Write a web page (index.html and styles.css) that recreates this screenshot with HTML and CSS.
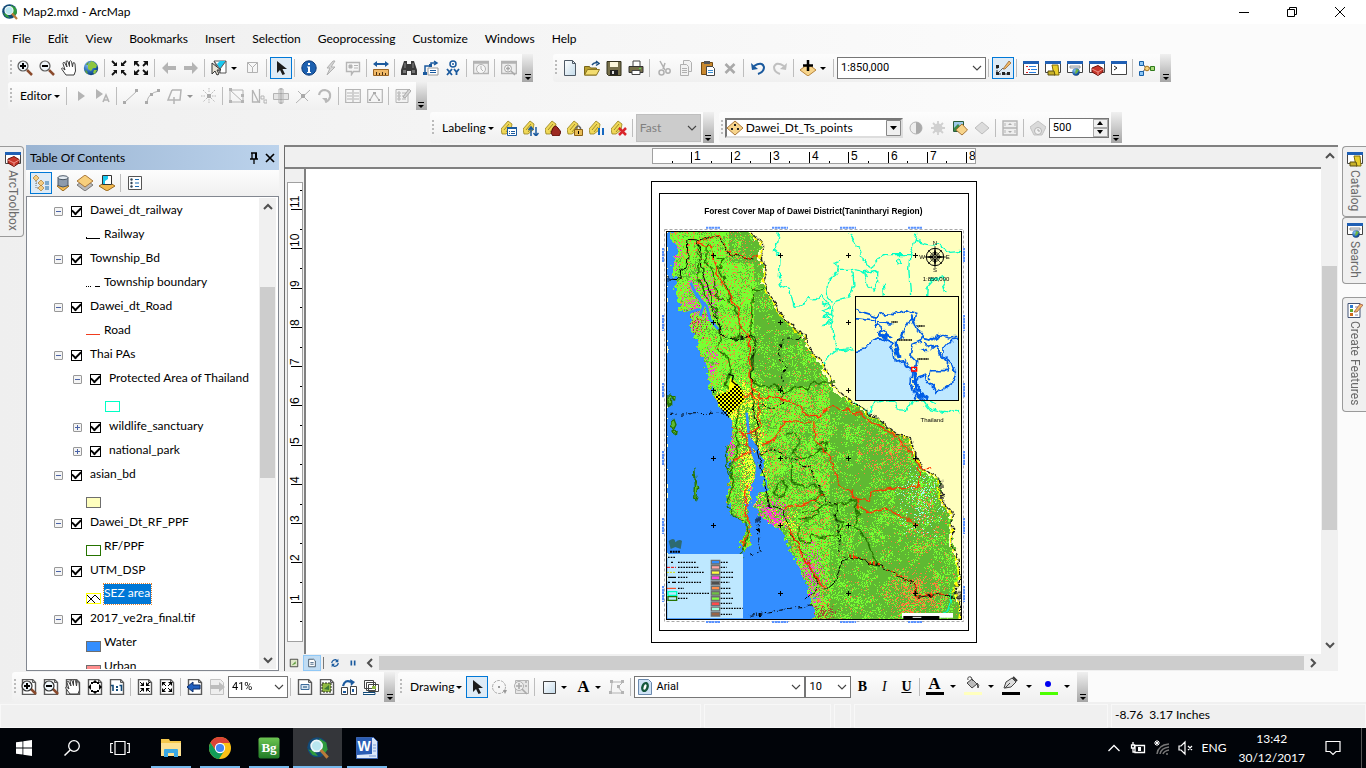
FILE: index.html
```html
<!DOCTYPE html>
<html lang="en">
<head>
    <meta charset="UTF-8">
    <meta name="viewport" content="width=device-width, initial-scale=1.0">
    <title>Map2.mxd - ArcMap</title>
    <link rel="stylesheet" href="styles.css">
</head>
<body>
    <!-- icon set, 16 x 16 grid -->
    <svg class="sprite" aria-hidden="true">
        <defs>
            <linearGradient id="steel" x1="0" y1="0" x2="1" y2="1"><stop offset="0" stop-color="#fff"/><stop offset="1" stop-color="#c4dbea"/></linearGradient>
            <radialGradient id="sea" cx=".35" cy=".3" r=".8"><stop offset="0" stop-color="#8fc4f5"/><stop offset=".6" stop-color="#1f62b0"/><stop offset="1" stop-color="#0b3463"/></radialGradient>
            <linearGradient id="leaf" x1="0" y1="0" x2="0" y2="1"><stop offset="0" stop-color="#6cc552"/><stop offset="1" stop-color="#1f7a26"/></linearGradient>
        </defs>
        <symbol id="arcmap" viewBox="0 0 16 16"><circle cx="7.5" cy="7.5" r="7.3" fill="#124a78"/><path d="M9 1l5 3 1 5-3 4-3-5z" fill="#2f9a3c"/><path d="M1 9l4 1 3 4-4-1z" fill="#2f9a3c"/><circle cx="7" cy="6.5" r="4" fill="#b9e6ef" stroke="#eef6f8" stroke-width="1.2"/><path d="M10 9.500l5 5.500" stroke="#b87b3a" stroke-width="2.200"/></symbol>
        <symbol id="zoom-in" viewBox="0 0 16 16"><path d="M10 10l5 5" stroke="#8a4a2c" stroke-width="2.500"/><circle cx="6" cy="6" r="5" fill="#eef5fa" stroke="#5c5c5c" stroke-width="1.200"/><path d="M3 6h6M6 3v6" stroke="#000" stroke-width="2"/></symbol>
        <symbol id="zoom-out" viewBox="0 0 16 16"><path d="M10 10l5 5" stroke="#8a4a2c" stroke-width="2.500"/><circle cx="6" cy="6" r="5" fill="#eef5fa" stroke="#5c5c5c" stroke-width="1.200"/><path d="M3 6h6" stroke="#000" stroke-width="2"/></symbol>
        <symbol id="hand" viewBox="0 0 16 16"><path d="M5 15L1 9.500Q0 8 1.500 8L4 10 2 3.500Q2 2 3.500 2.500L6 7 5 1.500Q6 0 7 1.500L8.500 6.500 8.500 1.500Q9.500 0 10.500 1.500L11.500 7 12 3Q13 2 14 3.500L14.500 11 13 15z" fill="#fff" stroke="#3c3c3c"/></symbol>
        <symbol id="globe" viewBox="0 0 16 16"><circle cx="8" cy="8" r="7.200" fill="url(#sea)"/><path d="M8 1l3 1 3 3-1 3-3 0-2 3-3-2 0-4 2-2zM11 10l3 0-2 4-2-1z" fill="#8dc63f"/><path d="M3 5l1-2 2-1-1 3zM2 10l2 1 1 3-2-1z" fill="#5da33a"/></symbol>
        <symbol id="fix-in" viewBox="0 0 16 16"><g fill="none" stroke="#111" stroke-width="1.800"><path d="M1 1l4 4M15 1l-4 4M1 15l4-4M15 15l-4-4"/></g><path d="M6 2v4H2zM10 2v4h4zM6 14v-4H2zM10 14v-4h4z" fill="#111"/></symbol>
        <symbol id="fix-out" viewBox="0 0 16 16"><g fill="none" stroke="#111" stroke-width="1.800"><path d="M3 3l3 3M13 3l-3 3M3 13l3-3M13 13l-3-3"/></g><path d="M1 1h5L1 6zM15 1h-5l5 5zM1 15h5l-5-5zM15 15h-5l5-5z" fill="#111"/></symbol>
        <symbol id="back" viewBox="0 0 16 16"><path d="M1 8l6-6v4h8v4H7v4z" fill="#b4b4b4"/></symbol>
        <symbol id="forward" viewBox="0 0 16 16"><path d="M15 8L9 2v4H1v4h8v4z" fill="#b4b4b4"/></symbol>
        <symbol id="select" viewBox="0 0 16 16"><path d="M3 1h12v12H9z" fill="#fff" stroke="#555"/><path d="M9 1h6L9 9 6 4z" fill="#19c8f0"/><path d="M3 1l6 8 6-8M9 9v4" fill="none" stroke="#555"/><path d="M1 3l0 11 3-3 2 4 2-1-2-4 4 0z" fill="#e9e3d6" stroke="#333"/></symbol>
        <symbol id="clear" viewBox="0 0 16 16"><path d="M2.500 2.500h10v10h-10zM2.500 2.500l5 5 5-5M7.500 7.500v5" fill="none" stroke="#b2b2b2"/></symbol>
        <symbol id="pointer" viewBox="0 0 16 16"><path d="M4 1v12l3-3 2.500 5 2.500-1-2.500-5H14z" fill="#1c1c1c"/></symbol>
        <symbol id="info" viewBox="0 0 16 16"><circle cx="8" cy="8" r="7.200" fill="#1c60b0" stroke="#0c3a78"/><path d="M7 3h2v2H7zM6 6.500h3V12h1v1H6v-1h1V7.500H6z" fill="#fff"/></symbol>
        <symbol id="bolt" viewBox="0 0 16 16"><path d="M10 1L4 8h3l-3 7 8-8H8l4-6z" fill="#d8d8d8" stroke="#b0b0b0"/></symbol>
        <symbol id="popup" viewBox="0 0 16 16"><path d="M1.500 2.500h13v9h-6l-2 3v-3h-5z" fill="none" stroke="#b5b5b5" stroke-width="1.400"/><path d="M4 5h3v3H4zM9 5.500h4M9 8h4" fill="#b5b5b5" stroke="#b5b5b5"/></symbol>
        <symbol id="measure" viewBox="0 0 16 16"><path d="M0 4l4-3v2h8V1l4 3-4 3V5H4v2z" fill="#1b5a9e"/><path d="M.5 9.500h15v6H.5z" fill="#f0b968" stroke="#9a6525"/><path d="M3.500 12v3M6.500 13v2M9.500 12v3M12.500 13v2" stroke="#4a3010"/></symbol>
        <symbol id="find" viewBox="0 0 16 16"><path d="M3 1h3v3h4V1h3l3 9v5h-6v-4H6v4H0v-5z" fill="#3b3b3b"/><path d="M2 10h3v3H2zM11 10h3v3h-3z" fill="#777"/><path d="M4 3v5M12 3v5" stroke="#8a8a8a"/></symbol>
        <symbol id="route" viewBox="0 0 16 16"><path d="M2 13V6h6V3h5M11 1l3 2-3 2" fill="none" stroke="#1b5a9e" stroke-width="1.500"/><path d="M5 8h10v7H5z" fill="#fff" stroke="#999"/><path d="M7 10.500h6M7 12.500h6" stroke="#1b5a9e"/><path d="M0 12h4v3H0zM6 4h3v3H6z" fill="#1b5a9e"/></symbol>
        <symbol id="go-xy" viewBox="0 0 16 16"><circle cx="8" cy="4" r="3" fill="#fff" stroke="#1b5a9e" stroke-width="1.500"/><circle cx="8" cy="4" r="1" fill="#1b5a9e"/><path d="M2 9l5 6M7 9l-5 6M9 9l2.500 3 2.500-3M11.500 12v3" fill="none" stroke="#1b5a9e" stroke-width="1.800"/></symbol>
        <symbol id="time" viewBox="0 0 16 16"><path d="M.5 1.500h15v12H.5zM0 3h16" fill="#eee" stroke="#b3b3b3" stroke-width="1.500"/><circle cx="8" cy="9" r="4.500" fill="#f6f6f6" stroke="#b3b3b3"/><path d="M8 6v3l2 2" fill="none" stroke="#b3b3b3"/></symbol>
        <symbol id="viewer" viewBox="0 0 16 16"><path d="M.5 1.500h15v12H.5zM0 3h16" fill="#eee" stroke="#b3b3b3" stroke-width="1.500"/><circle cx="7" cy="8.500" r="3.500" fill="#f6f6f6" stroke="#a8a8a8"/><path d="M5 8.500h4M7 6.500v4M10 11l4 4" stroke="#a8a8a8" stroke-width="1.500"/></symbol>

        <symbol id="new" viewBox="0 0 16 16"><path d="M2.500.5h8l3 3v12h-11z" fill="url(#steel)" stroke="#4f5a66"/><path d="M10.500.5v3h3" fill="none" stroke="#4f5a66"/></symbol>
        <symbol id="open" viewBox="0 0 16 16"><path d="M.5 15V6.500h5l1 1.500h6v7z" fill="#b9a02e" stroke="#77651a"/><path d="M.5 15l3-5.500h12l-3 5.500z" fill="#f3dd70" stroke="#8c7620"/><path d="M8 5q2-3 5-2M12 1l3 2.500-3 2" fill="none" stroke="#1b4d80" stroke-width="1.500"/></symbol>
        <symbol id="save" viewBox="0 0 16 16"><path d="M1 1.500h14v14H2.500L1 14z" fill="#77704a" stroke="#33301c"/><path d="M4 2h8v5H4z" fill="#fbf6da"/><path d="M4 10h8v5H4z" fill="#222"/><path d="M6 11h2v3H6z" fill="#ddd"/></symbol>
        <symbol id="print" viewBox="0 0 16 16"><path d="M5 6V1h7v5" fill="#fff" stroke="#444"/><path d="M1 6.500h14v6H1z" fill="#77704a" stroke="#333"/><path d="M4 10.500h8v4H4z" fill="#fff" stroke="#444"/><path d="M11 8h2v1h-2z" fill="#4be04b"/></symbol>
        <symbol id="cut" viewBox="0 0 16 16"><g fill="none" stroke="#b0b0b0" stroke-width="1.500"><path d="M4 1l5 9M9 3L7 9"/><circle cx="5.500" cy="12.500" r="2.500"/><circle cx="12" cy="11" r="2.200"/></g></symbol>
        <symbol id="copy" viewBox="0 0 16 16"><path d="M5.500.5h6l2 2v9h-8z" fill="#f2f2f2" stroke="#b0b0b0"/><path d="M2.500 4.500h6l2 2v9h-8z" fill="#f2f2f2" stroke="#b0b0b0"/><path d="M4 8.500h5M4 10.500h5M4 12.500h5" stroke="#b0b0b0"/></symbol>
        <symbol id="paste" viewBox="0 0 16 16"><path d="M1.500 2.500h11v12h-11z" fill="#c9892f" stroke="#724a12"/><path d="M4 1h6v3H4z" fill="#555"/><path d="M6.500 6.500h6l2 2v7h-8z" fill="#fff" stroke="#444"/><path d="M8 10.500h5M8 12.500h5" stroke="#3b8ed0"/></symbol>
        <symbol id="delete" viewBox="0 0 16 16"><path d="M3.500 4l9 9M12.500 4l-9 9" stroke="#a9a9a9" stroke-width="2.600"/></symbol>
        <symbol id="undo" viewBox="0 0 16 16"><path d="M4 6q8-5 10 1 0 5-6 7" fill="none" stroke="#1b5a9e" stroke-width="2"/><path d="M1 3l1 7 6-1z" fill="#1b5a9e"/></symbol>
        <symbol id="redo" viewBox="0 0 16 16"><path d="M12 6Q4 1 2 7q0 5 6 7" fill="none" stroke="#c0c0c0" stroke-width="2"/><path d="M15 3l-1 7-6-1z" fill="#c0c0c0"/></symbol>
        <symbol id="add-data" viewBox="0 0 16 16"><path d="M8 4l8 6-8 6-8-6z" fill="#f7d48b" stroke="#b7853b"/><path d="M8 0v11M3 5.500h10" stroke="#000" stroke-width="2.500"/></symbol>
        <symbol id="sketch" viewBox="0 0 16 16"><path d="M2 7v7h12M2 14l6-6" fill="none" stroke="#333" stroke-dasharray="2 1"/><path d="M1 5h3v3H1zM1 12h3v3H1zM7 12h3v3H7zM12 12h3v3h-3z" fill="#222"/><path d="M8 9l6-8 2 2-6 6z" fill="#f0b968" stroke="#8c5a26" stroke-width=".7"/></symbol>
        <symbol id="win-toc" viewBox="0 0 16 16"><path d="M.5 1.500h15v13H.5z" fill="#fff" stroke="#444"/><path d="M0 1h16v3H0z" fill="#1f5fb4"/><path d="M3 6.500h2M5 9.500h2M3 12.500h2" stroke="#d22"/><path d="M6 6.500h7M8 9.500h6M6 12.500h7" stroke="#2a7fe0"/></symbol>
        <symbol id="win-catalog" viewBox="0 0 16 16"><path d="M.5 1.500h15v11H.5z" fill="#fff" stroke="#444"/><path d="M0 1h16v3H0z" fill="#1f5fb4"/><path d="M7 5l6 0 1 10-5 0z" fill="#e9cf2c" stroke="#7d6a0c"/><path d="M3 11h6l1 4H3z" fill="#c6b02a" stroke="#5a4e10"/></symbol>
        <symbol id="win-search" viewBox="0 0 16 16"><path d="M.5 1.500h15v11H.5z" fill="#fff" stroke="#444"/><path d="M0 1h16v3H0z" fill="#1f5fb4"/><path d="M3 6h10v2H3z" fill="#dfe9f2" stroke="#999"/><circle cx="9" cy="12" r="3.700" fill="url(#sea)"/><path d="M9 9l3 1-2 3-2 1z" fill="#6fb53a"/></symbol>
        <symbol id="win-toolbox" viewBox="0 0 16 16"><path d="M.5 1.500h15v11H.5z" fill="#fff" stroke="#444"/><path d="M0 1h16v3H0z" fill="#1f5fb4"/><path d="M3 8l6-2.500 5 3v3.500l-5 3.500-6-3.500z" fill="#c8372b" stroke="#6d130c"/><path d="M3 9l6 3 5-3M9 12v3" fill="none" stroke="#f0948a"/></symbol>
        <symbol id="win-python" viewBox="0 0 16 16"><path d="M.5 1.500h15v13H.5z" fill="#fff" stroke="#444"/><path d="M0 1h16v3H0z" fill="#1f5fb4"/><path d="M3 6l3 2-3 2" fill="none" stroke="#222"/></symbol>
        <symbol id="model" viewBox="0 0 16 16"><path d="M3 3l4 5 6 0M3 13l4-5" fill="none" stroke="#444"/><path d="M.5 1.500h4v4h-4zM.5 11.500h4v4h-4z" fill="#8cc6f5" stroke="#155fa8"/><circle cx="8" cy="8.500" r="2.300" fill="#f6d37c" stroke="#a8741c"/><path d="M11.500 6.500h4v4h-4z" fill="#a7d977" stroke="#2f7a1c"/></symbol>

        <symbol id="edit-tool" viewBox="0 0 16 16"><path d="M5 3v10l7-5z" fill="#b4b4b4"/></symbol>
        <symbol id="edit-ann" viewBox="0 0 16 16"><path d="M1 1v10l7-5z" fill="#b4b4b4"/><path d="M8 14l3-7 3 7M9 12h4" fill="none" stroke="#b4b4b4" stroke-width="1.600"/></symbol>
        <symbol id="line" viewBox="0 0 16 16"><path d="M2 14L14 3" stroke="#b4b4b4"/><path d="M0 13h3v3H0zM12 1h3v3h-3z" fill="#aaa"/></symbol>
        <symbol id="arc" viewBox="0 0 16 16"><path d="M2 14Q3 5 14 3" fill="none" stroke="#b4b4b4"/><path d="M0 13h3v3H0zM12 1h3v3h-3zM5 5h3v3H5z" fill="#aaa"/></symbol>
        <symbol id="trace" viewBox="0 0 16 16"><path d="M5 2h9l-1 10H8M5 2L1 12h4M3 12h8M7 9v7" fill="none" stroke="#b4b4b4" stroke-width="1.500"/></symbol>
        <symbol id="point" viewBox="0 0 16 16"><path d="M8 0v5M8 11v5M0 8h5M11 8h5M2 2l4 4M10 10l4 4M14 2l-4 4M6 10l-4 4" stroke="#bbb" stroke-dasharray="1.500 1"/><path d="M6 6h4v4H6z" fill="#aaa"/></symbol>
        <symbol id="reshape" viewBox="0 0 16 16"><path d="M1 2v12h13V9M1 2l13 12M3 2h11v6" fill="none" stroke="#b4b4b4"/><path d="M0 0h3v3H0zM12 6h3v3h-3zM12 12h3v3h-3zM0 12h3v3H0z" fill="#b4b4b4"/></symbol>
        <symbol id="cut-poly" viewBox="0 0 16 16"><path d="M1.500 2v12h6L1.500 2M8.500 1v14" fill="none" stroke="#b4b4b4" stroke-width="1.300"/><path d="M10 8h3v3h-3zM13 12h3v3h-3z" fill="none" stroke="#b4b4b4"/></symbol>
        <symbol id="split" viewBox="0 0 16 16"><path d="M.5 5.500h15v6H.5z" fill="#e5e5e5" stroke="#b4b4b4"/><path d="M6 1h4v14H6z" fill="none" stroke="#b4b4b4"/><path d="M8 0v16" stroke="#999"/></symbol>
        <symbol id="split2" viewBox="0 0 16 16"><path d="M1 15L15 2M3 3l10 10" stroke="#b4b4b4"/><path d="M6 6h4v4H6z" fill="#aaa"/></symbol>
        <symbol id="rotate" viewBox="0 0 16 16"><path d="M2 7q1-5 6-5 6 1 5 7-1 4-5 5" fill="none" stroke="#b8b8b8" stroke-width="2.200"/><path d="M5 10h5v5z" fill="#b8b8b8"/></symbol>
        <symbol id="attr" viewBox="0 0 16 16"><path d="M.7 1.500h14.600v13H.7zM8 2v12M2 5h5M2 8h5M2 11h5M9 5h5M9 8h5M9 11h5" fill="none" stroke="#b4b4b4" stroke-width="1.200"/></symbol>
        <symbol id="sketch-prop" viewBox="0 0 16 16"><path d="M.7 1.500h14.600v13H.7zM3 12l4-7 5 7" fill="none" stroke="#b4b4b4" stroke-width="1.200"/><path d="M2 11h2v2H2zM6 4h3v2H6zM11 11h2v2h-2z" fill="#aaa"/></symbol>
        <symbol id="create-off" viewBox="0 0 16 16"><path d="M1 1.500h12v13H1zM7 5h4M7 8h4M7 11h4M3 4h2v2H3zM3 7h2v2H3zM3 10h2v2H3z" fill="#f2f2f2" stroke="#b4b4b4"/><path d="M8 9l6-8 2 2-6 7z" fill="#d5d5d5" stroke="#a9a9a9"/></symbol>

        <symbol id="tag" viewBox="0 0 16 16"><path d="M0 9L7 1l4 3-1 6-5 4H1z" fill="#f0d858" stroke="#94801c" stroke-width=".8"/><path d="M3 10l5-6M5 12l4-5" stroke="#a08c28"/></symbol>
        <symbol id="lab-manager" viewBox="0 0 16 16"><use href="#tag"/><path d="M6.500 7.500h9v8h-9z" fill="#fff" stroke="#1b5a9e"/><path d="M6 7h10v2H6z" fill="#1b5a9e"/><path d="M8 11.500h1M10 11.500h4M8 13.500h1M10 13.500h4" stroke="#1b5a9e"/></symbol>
        <symbol id="lab-priority" viewBox="0 0 16 16"><use href="#tag"/><path d="M8 16V8M5.500 10L8 7l2.500 3M13 7v8M10.500 13l2.500 3 2.500-3" fill="none" stroke="#1b5a9e" stroke-width="1.500"/></symbol>
        <symbol id="lab-weight" viewBox="0 0 16 16"><use href="#tag"/><path d="M8 8q2-4 5 0l3 4-2 4H8l-2-3z" fill="#9d2a22" stroke="#5a0e0a"/></symbol>
        <symbol id="lab-lock" viewBox="0 0 16 16"><use href="#tag"/><path d="M9 10V8q2-4 4.500 0v2" fill="none" stroke="#666" stroke-width="1.500"/><path d="M7.500 9.500h8v6h-8z" fill="#e9bd58" stroke="#8a6116"/><path d="M11 11h1v3h-1z" fill="#000"/></symbol>
        <symbol id="lab-pause" viewBox="0 0 16 16"><use href="#tag"/><path d="M10 8v7M14 8v7" stroke="#1668c0" stroke-width="2"/></symbol>
        <symbol id="lab-unplaced" viewBox="0 0 16 16"><use href="#tag"/><path d="M8 8l7 7M15 8l-7 7" stroke="#d9262c" stroke-width="2.500"/></symbol>
        <symbol id="points" viewBox="0 0 16 16"><path d="M8 1l8 7-8 7-8-7z" fill="#f7d48b" stroke="#a8763a"/><path d="M7 4h2v2H7zM4 8h2v2H4zM10 8h2v2h-2z" fill="#222"/></symbol>
        <symbol id="contrast" viewBox="0 0 16 16"><circle cx="8" cy="8" r="6" fill="#eee" stroke="#b4b4b4"/><path d="M8 2a6 6 0 0 1 0 12z" fill="#aaa"/></symbol>
        <symbol id="bright" viewBox="0 0 16 16"><circle cx="8" cy="8" r="4.500" fill="#d0d0d0"/><path d="M8 1v14M1 8h14M3 3l10 10M13 3L3 13" stroke="#d0d0d0" stroke-width="1.800"/></symbol>
        <symbol id="transp" viewBox="0 0 16 16"><path d="M1.500 1.500h10v10h-10z" fill="#9cc9ea" stroke="#2a5d3a"/><path d="M2 8l4-4 5 5v2H2z" fill="#3e8a46"/><path d="M10 4l5.500 6-5.500 5-6-5z" fill="#f7d48b" stroke="#a8763a"/></symbol>
        <symbol id="diamond" viewBox="0 0 16 16"><path d="M8 2l7 6-7 6-7-6z" fill="#dcdcdc" stroke="#bdbdbd"/></symbol>
        <symbol id="swipe" viewBox="0 0 16 16"><path d="M1 1h14v14H1zM1 8h14" fill="#eee" stroke="#b4b4b4" stroke-width="1.400"/><path d="M8 3l2 2H6zM8 13l2-2H6z" fill="#aaa"/><path d="M3 3v3M13 3v3M3 10v3M13 10v3" stroke="#b4b4b4"/></symbol>
        <symbol id="flicker" viewBox="0 0 16 16"><path d="M8 1l8 6-4 8H4L0 7z" fill="#dadada" stroke="#c2c2c2"/><circle cx="8" cy="11" r="3.500" fill="#f3f3f3" stroke="#b4b4b4"/><path d="M8 9v2h2" fill="none" stroke="#a5a5a5"/></symbol>

        <symbol id="by-order" viewBox="0 0 16 16"><path d="M3 4v9h5M3 8h5" fill="none" stroke="#777" stroke-dasharray="1 1"/><path d="M3 0l3 3-3 3-3-3zM8 5l3 3-3 3-3-3zM8 10l3 3-3 3-3-3z" fill="#f3cd82" stroke="#ad7a32" stroke-width=".7"/><path d="M12 7h4M12 9h4M12 12h4M12 14h4" stroke="#1668a8"/></symbol>
        <symbol id="by-source" viewBox="0 0 16 16"><path d="M8 8l6 3-6 5-6-5z" fill="#f3b94f" stroke="#9a6a20"/><path d="M3 2.500v8q5 3 10 0v-8z" fill="#8d9aab" stroke="#4a5766"/><ellipse cx="8" cy="2.700" rx="5" ry="2" fill="#e4ebf2" stroke="#4a5766"/></symbol>
        <symbol id="by-vis" viewBox="0 0 16 16"><path d="M8 4l8 6-8 6-8-6z" fill="#b9b9b9" stroke="#777"/><path d="M8 0l8 6-8 6-8-6z" fill="#f7cf7c" stroke="#a8763a"/></symbol>
        <symbol id="by-sel" viewBox="0 0 16 16"><path d="M8 6l8 5-8 5-8-5z" fill="#f3b94f" stroke="#9a6a20"/><path d="M3.500.5h9v9h-9z" fill="#fff" stroke="#333"/><path d="M4 1h5v3l-3 2v3H4z" fill="#19c8f0"/></symbol>
        <symbol id="options" viewBox="0 0 16 16"><path d="M1.500 1.500h13v13h-13z" fill="#fff" stroke="#555"/><circle cx="4.500" cy="4.500" r="1.200" fill="#345"/><circle cx="4.500" cy="8" r="1.200" fill="#345"/><circle cx="4.500" cy="11.500" r="1.200" fill="#345"/><path d="M8 4.500h4M8 8h4M8 11.500h4" stroke="#1b6ab0"/></symbol>
        <symbol id="pin" viewBox="0 0 16 16"><path d="M5 3h6M6 3v6M4 9h8M8 9v5" fill="none" stroke="#000" stroke-width="1.300"/><path d="M9 3h2v6H9z"/></symbol>
        <symbol id="close" viewBox="0 0 16 16"><path d="M4 4l8 8M12 4l-8 8" stroke="#000" stroke-width="1.700"/></symbol>
        <symbol id="create" viewBox="0 0 16 16"><path d="M1 1.500h12v14H1z" fill="#fff" stroke="#457"/><path d="M3 3h3v3H3z" fill="#2d79d0"/><path d="M3 7h3v3H3z" fill="#5caa2c"/><path d="M3 11h3v3H3z" fill="#d06a1c"/><path d="M8 5h3M8 9h3M8 13h3" stroke="#88a"/><path d="M7 10l6-8 3 1-6 7z" fill="#f0b968" stroke="#9a4d3c" stroke-width=".7"/></symbol>

        <symbol id="sheet" viewBox="0 0 16 16"><path d="M1.500.5h10l3 3v12h-13z" fill="#fff" stroke="#5a5a5a" stroke-width="1.400"/><path d="M11.500.5v3h3" fill="none" stroke="#5a5a5a"/></symbol>
        <symbol id="lay-in" viewBox="0 0 16 16"><use href="#sheet"/><path d="M9 9l6 6" stroke="#8a4a2c" stroke-width="2.500"/><circle cx="6" cy="7" r="5" fill="#eef5fa" stroke="#333" stroke-width="1.200"/><path d="M3 7h6M6 4v6" stroke="#000" stroke-width="2"/></symbol>
        <symbol id="lay-out" viewBox="0 0 16 16"><use href="#sheet"/><path d="M9 9l6 6" stroke="#8a4a2c" stroke-width="2.500"/><circle cx="6" cy="7" r="5" fill="#eef5fa" stroke="#333" stroke-width="1.200"/><path d="M3 7h6" stroke="#000" stroke-width="2"/></symbol>
        <symbol id="lay-pan" viewBox="0 0 16 16"><use href="#sheet"/><use href="#hand"/></symbol>
        <symbol id="lay-full" viewBox="0 0 16 16"><use href="#sheet"/><path d="M8 1l3 3H5zM8 15l3-3H5zM1 8l3-3v6zM15 8l-3-3v6z" fill="#000"/><path d="M4 4l2 0M10 4h2M4 12h2M10 12h2" stroke="#000" stroke-width="2"/></symbol>
        <symbol id="lay-100" viewBox="0 0 16 16"><use href="#sheet"/><path d="M2 6.500h2V12M10.500 6.500h2V12" fill="none" stroke="#124a78" stroke-width="1.600"/><path d="M7 7h2v2H7zM7 10h2v2H7z" fill="#124a78"/></symbol>
        <symbol id="lay-fixin" viewBox="0 0 16 16"><use href="#sheet"/><path d="M7 3v4H3zM9 3v4h4zM7 13V9H3zM9 13V9h4z" fill="#000"/><path d="M3 3l3 3M13 3l-3 3M3 13l3-3M13 13l-3-3" stroke="#000"/></symbol>
        <symbol id="lay-fixout" viewBox="0 0 16 16"><use href="#sheet"/><path d="M3 3h4L3 7zM13 3H9l4 4zM3 13h4L3 9zM13 13H9l4-4z" fill="#000"/><path d="M4 4l3 3M12 4l-3 3M4 12l3-3M12 12l-3-3" stroke="#000"/></symbol>
        <symbol id="lay-back" viewBox="0 0 16 16"><use href="#sheet"/><path d="M0 8l6-5v3h7v4H6v3z" fill="#1f5fc0" stroke="#0c2f6c"/></symbol>
        <symbol id="lay-fwd" viewBox="0 0 16 16"><path d="M1.500.5h10l3 3v12h-13z" fill="#eee" stroke="#c2c2c2"/><path d="M16 8l-6-5v3H1v4h9v3z" fill="#bdbdbd"/></symbol>
        <symbol id="draft" viewBox="0 0 16 16"><use href="#sheet"/><path d="M4 5.500h8v5H4z" fill="#d9e6f2" stroke="#3b6a9a"/><path d="M6 8h4" stroke="#124a78"/></symbol>
        <symbol id="focus" viewBox="0 0 16 16"><use href="#sheet"/><path d="M3 4h9v9H3z" fill="#8fb843" stroke="#222" stroke-dasharray="2 1"/><path d="M5 10l5-4v5z" fill="#3d7a36"/></symbol>
        <symbol id="layout-chg" viewBox="0 0 16 16"><path d="M2 7q2-7 8-4" fill="none" stroke="#1b5a9e" stroke-width="2.200"/><path d="M9 0l5 3-4 4z" fill="#1b5a9e"/><path d="M.5 8.500h6v7h-6zM9.500 7.500h6v8h-6z" fill="#fff" stroke="#444"/><path d="M2 12h3v2H2zM11 10h2v3h-2z" fill="#1b5a9e"/></symbol>
        <symbol id="driven" viewBox="0 0 16 16"><path d="M1.500 1.500h9v8h-9zM3.500 3.500h9v8h-9zM5.500 5.500h10v7h-10z" fill="#fff" stroke="#444"/><path d="M9 7h4v3H9z" fill="#8fb843"/><path d="M0 13.500h12v2H0z" fill="#fff" stroke="#124a78"/></symbol>
        <symbol id="rot-circle" viewBox="0 0 16 16"><circle cx="8" cy="8" r="6.500" fill="none" stroke="#aaa" stroke-dasharray="3 1"/><path d="M7 7h2v2H7zM12 11h4l-2 4z" fill="#999"/></symbol>
        <symbol id="zoom-sel" viewBox="0 0 16 16"><path d="M2.500 1.500h13v13h-13z" fill="#e6e6e6" stroke="#b4b4b4"/><circle cx="6" cy="7" r="4.500" fill="#eee" stroke="#b0b0b0"/><path d="M3 7h6M6 4v6M9 10l5 5M12 3h2M12 7h2" stroke="#aaa" stroke-width="1.600"/></symbol>
        <symbol id="rect" viewBox="0 0 16 16"><path d="M2.500 2.500h12v12h-12z" fill="url(#steel)" stroke="#444"/></symbol>
        <symbol id="vertices" viewBox="0 0 16 16"><path d="M3 3h11L9 8l5 6H2z" fill="none" stroke="#b4b4b4"/><path d="M1 1h3v3H1zM12 1h3v3h-3zM8 6h3v3H8zM12 12h3v3h-3zM0 12h3v3H0z" fill="#b4b4b4"/></symbol>
        <symbol id="bucket" viewBox="0 0 16 16"><path d="M3 7l5-4 5 5-5 4z" fill="#bbb" stroke="#444"/><path d="M4 4q-1-4 3-3l2 4M13 7q3 2 1 5z" fill="none" stroke="#444"/></symbol>
        <symbol id="pen" viewBox="0 0 16 16"><path d="M2 12l2-6 6-4 4 4-5 5-6 1zM3 12l5-5" fill="#ddd" stroke="#444"/><path d="M11 1l4 4" stroke="#333" stroke-width="2"/></symbol>
        <symbol id="font-o" viewBox="0 0 16 16"><path d="M1.500.5h10l3 3v12h-13z" fill="#cfe2f6" stroke="#6a89ad"/><ellipse cx="8" cy="8" rx="2.500" ry="4" transform="rotate(20 8 8)" fill="#fff" stroke="#15573c" stroke-width="2.400"/></symbol>
        <symbol id="chev" viewBox="0 0 10 10"><path d="M1 3l4 4 4-4" fill="none" stroke="#444" stroke-width="1.100"/></symbol>
        <symbol id="arrow" viewBox="0 0 10 10"><path d="M2 4h6L5 7z"/></symbol>
        <symbol id="more" viewBox="0 0 10 10"><path d="M2 2.500h6" stroke="#000"/><path d="M2 5h6L5 8z"/></symbol>
        <symbol id="sb" viewBox="0 0 10 10"><path d="M1 7l4-4 4 4" fill="none" stroke="#505050" stroke-width="2"/></symbol>
    </svg>

    <header class="titlebar">
        <svg class="icon"><use href="#arcmap"/></svg>
        <h1>Map2.mxd - ArcMap</h1>
        <div class="win-btns">
            <button aria-label="Minimize"><svg viewBox="0 0 12 12"><path d="M1 6.500h10" stroke="#000"/></svg></button>
            <button aria-label="Restore"><svg viewBox="0 0 12 12"><path d="M1.500 3.500h7v7h-7zM3.500 3V1.500h7v7H9" fill="none" stroke="#000"/></svg></button>
            <button aria-label="Close"><svg viewBox="0 0 12 12"><path d="M1 1l10 10M11 1L1 11" stroke="#000"/></svg></button>
        </div>
    </header>

    <nav class="menubar">
        <button>File</button><button>Edit</button><button>View</button><button>Bookmarks</button><button>Insert</button><button>Selection</button><button>Geoprocessing</button><button>Customize</button><button>Windows</button><button>Help</button>
    </nav>

    <div class="toolrow">
        <div class="toolbar" role="toolbar" aria-label="Tools">
            <i class="grip"></i>
            <button class="tool" aria-label="Zoom In"><svg><use href="#zoom-in"/></svg></button>
            <button class="tool" aria-label="Zoom Out"><svg><use href="#zoom-out"/></svg></button>
            <button class="tool" aria-label="Pan"><svg><use href="#hand"/></svg></button>
            <button class="tool" aria-label="Full Extent"><svg><use href="#globe"/></svg></button>
            <i class="sep"></i>
            <button class="tool" aria-label="Fixed Zoom In"><svg><use href="#fix-in"/></svg></button>
            <button class="tool" aria-label="Fixed Zoom Out"><svg><use href="#fix-out"/></svg></button>
            <i class="sep"></i>
            <button class="tool" aria-label="Back"><svg><use href="#back"/></svg></button>
            <button class="tool" aria-label="Forward"><svg><use href="#forward"/></svg></button>
            <i class="sep"></i>
            <button class="tool drop" aria-label="Select Features"><svg><use href="#select"/></svg><svg class="arrow"><use href="#arrow"/></svg></button>
            <button class="tool" aria-label="Clear Selection"><svg><use href="#clear"/></svg></button>
            <i class="sep"></i>
            <button class="tool on" aria-label="Select Elements"><svg><use href="#pointer"/></svg></button>
            <i class="sep"></i>
            <button class="tool" aria-label="Identify"><svg><use href="#info"/></svg></button>
            <button class="tool" aria-label="Hyperlink"><svg><use href="#bolt"/></svg></button>
            <button class="tool" aria-label="HTML Popup"><svg><use href="#popup"/></svg></button>
            <i class="sep"></i>
            <button class="tool" aria-label="Measure"><svg><use href="#measure"/></svg></button>
            <i class="sep"></i>
            <button class="tool" aria-label="Find"><svg><use href="#find"/></svg></button>
            <button class="tool" aria-label="Find Route"><svg><use href="#route"/></svg></button>
            <button class="tool" aria-label="Go To XY"><svg><use href="#go-xy"/></svg></button>
            <i class="sep"></i>
            <button class="tool" aria-label="Time Slider"><svg><use href="#time"/></svg></button>
            <i class="sep"></i>
            <button class="tool" aria-label="Viewer Window"><svg><use href="#viewer"/></svg></button>
            <button class="more" aria-label="Toolbar Options"><svg><use href="#more"/></svg></button>
        </div>
        <div class="toolbar" role="toolbar" aria-label="Standard">
            <i class="grip"></i>
            <button class="tool" aria-label="New"><svg><use href="#new"/></svg></button>
            <button class="tool" aria-label="Open"><svg><use href="#open"/></svg></button>
            <button class="tool" aria-label="Save"><svg><use href="#save"/></svg></button>
            <button class="tool" aria-label="Print"><svg><use href="#print"/></svg></button>
            <i class="sep"></i>
            <button class="tool" aria-label="Cut"><svg><use href="#cut"/></svg></button>
            <button class="tool" aria-label="Copy"><svg><use href="#copy"/></svg></button>
            <button class="tool" aria-label="Paste"><svg><use href="#paste"/></svg></button>
            <button class="tool" aria-label="Delete"><svg><use href="#delete"/></svg></button>
            <i class="sep"></i>
            <button class="tool" aria-label="Undo"><svg><use href="#undo"/></svg></button>
            <button class="tool" aria-label="Redo"><svg><use href="#redo"/></svg></button>
            <i class="sep"></i>
            <button class="tool drop" aria-label="Add Data"><svg><use href="#add-data"/></svg><svg class="arrow"><use href="#arrow"/></svg></button>
            <i class="sep"></i>
            <span class="combo scale"><select aria-label="Map Scale"><option>1:850,000</option></select><svg><use href="#chev"/></svg></span>
            <i class="sep"></i>
            <button class="tool on" aria-label="Editor Toolbar"><svg><use href="#sketch"/></svg></button>
            <i class="sep"></i>
            <button class="tool" aria-label="Table Of Contents"><svg><use href="#win-toc"/></svg></button>
            <button class="tool" aria-label="Catalog"><svg><use href="#win-catalog"/></svg></button>
            <button class="tool" aria-label="Search"><svg><use href="#win-search"/></svg></button>
            <button class="tool" aria-label="ArcToolbox"><svg><use href="#win-toolbox"/></svg></button>
            <button class="tool" aria-label="Python"><svg><use href="#win-python"/></svg></button>
            <i class="sep"></i>
            <button class="tool" aria-label="ModelBuilder"><svg><use href="#model"/></svg></button>
            <button class="more" aria-label="Toolbar Options"><svg><use href="#more"/></svg></button>
        </div>
    </div>

    <div class="toolrow">
        <div class="toolbar" role="toolbar" aria-label="Editor">
            <i class="grip"></i>
            <button class="text-tool">Editor<svg><use href="#arrow"/></svg></button>
            <i class="sep"></i>
            <button class="tool" aria-label="Edit Tool"><svg><use href="#edit-tool"/></svg></button>
            <button class="tool" aria-label="Edit Annotation"><svg><use href="#edit-ann"/></svg></button>
            <i class="sep"></i>
            <button class="tool" aria-label="Straight Segment"><svg><use href="#line"/></svg></button>
            <button class="tool" aria-label="End Point Arc"><svg><use href="#arc"/></svg></button>
            <button class="tool drop off" aria-label="Trace"><svg><use href="#trace"/></svg><svg class="arrow"><use href="#arrow"/></svg></button>
            <button class="tool" aria-label="Point"><svg><use href="#point"/></svg></button>
            <i class="sep"></i>
            <button class="tool" aria-label="Edit Vertices"><svg><use href="#reshape"/></svg></button>
            <button class="tool" aria-label="Reshape"><svg><use href="#cut-poly"/></svg></button>
            <button class="tool" aria-label="Cut Polygons"><svg><use href="#split"/></svg></button>
            <button class="tool" aria-label="Split"><svg><use href="#split2"/></svg></button>
            <button class="tool" aria-label="Rotate"><svg><use href="#rotate"/></svg></button>
            <i class="sep"></i>
            <button class="tool" aria-label="Attributes"><svg><use href="#attr"/></svg></button>
            <button class="tool" aria-label="Sketch Properties"><svg><use href="#sketch-prop"/></svg></button>
            <i class="sep"></i>
            <button class="tool" aria-label="Create Features"><svg><use href="#create-off"/></svg></button>
            <button class="more" aria-label="Toolbar Options"><svg><use href="#more"/></svg></button>
        </div>
    </div>

    <div class="toolrow labelrow">
        <div class="toolbar" role="toolbar" aria-label="Labeling">
            <i class="grip"></i>
            <button class="text-tool">Labeling<svg><use href="#arrow"/></svg></button>
            <button class="tool" aria-label="Label Manager"><svg><use href="#lab-manager"/></svg></button>
            <button class="tool" aria-label="Label Priority"><svg><use href="#lab-priority"/></svg></button>
            <button class="tool" aria-label="Label Weight"><svg><use href="#lab-weight"/></svg></button>
            <button class="tool" aria-label="Lock Labels"><svg><use href="#lab-lock"/></svg></button>
            <button class="tool" aria-label="Pause Labeling"><svg><use href="#lab-pause"/></svg></button>
            <button class="tool" aria-label="View Unplaced"><svg><use href="#lab-unplaced"/></svg></button>
            <i class="sep"></i>
            <span class="combo fast"><select aria-label="Placement Quality" disabled><option>Fast</option></select><svg><use href="#chev"/></svg></span>
            <button class="more" aria-label="Toolbar Options"><svg><use href="#more"/></svg></button>
        </div>
        <div class="toolbar" role="toolbar" aria-label="Effects">
            <i class="grip"></i>
            <span class="combo layer"><svg class="icon"><use href="#points"/></svg><select aria-label="Layer"><option>Dawei_Dt_Ts_points</option></select><svg viewBox="0 0 15 16"><path d="M.5.5h14v15H.5z" fill="#f0f0f0" stroke="#888"/><path d="M4 6h7l-3.500 4z"/></svg></span>
            <button class="tool" aria-label="Contrast"><svg><use href="#contrast"/></svg></button>
            <button class="tool" aria-label="Brightness"><svg><use href="#bright"/></svg></button>
            <button class="tool" aria-label="Transparency"><svg><use href="#transp"/></svg></button>
            <button class="tool" aria-label="Dim"><svg><use href="#diamond"/></svg></button>
            <i class="sep"></i>
            <button class="tool" aria-label="Swipe"><svg><use href="#swipe"/></svg></button>
            <i class="sep"></i>
            <button class="tool" aria-label="Flicker"><svg><use href="#flicker"/></svg></button>
            <span class="spin"><input type="text" value="500" aria-label="Flicker rate"><span><button aria-label="Up"><svg viewBox="0 0 8 6"><path d="M1 5h6L4 1z"/></svg></button><button aria-label="Down"><svg viewBox="0 0 8 6"><path d="M1 1h6L4 5z"/></svg></button></span></span>
            <button class="more" aria-label="Toolbar Options"><svg><use href="#more"/></svg></button>
        </div>
    </div>

    <main>
        <aside class="dock left">
            <button class="tab"><svg class="icon"><use href="#win-toolbox"/></svg><span>ArcToolbox</span></button>
        </aside>

        <section class="toc">
            <header>
                <h2>Table Of Contents</h2>
                <button aria-label="Auto Hide"><svg class="icon"><use href="#pin"/></svg></button>
                <button aria-label="Close"><svg class="icon"><use href="#close"/></svg></button>
            </header>
            <div class="toc-tools">
                <button class="tool on" aria-label="List By Drawing Order"><svg><use href="#by-order"/></svg></button>
                <button class="tool" aria-label="List By Source"><svg><use href="#by-source"/></svg></button>
                <button class="tool" aria-label="List By Visibility"><svg><use href="#by-vis"/></svg></button>
                <button class="tool" aria-label="List By Selection"><svg><use href="#by-sel"/></svg></button>
                <i class="sep"></i>
                <button class="tool" aria-label="Options"><svg><use href="#options"/></svg></button>
            </div>
            <div class="tree-box">
                <ul class="tree">
                    <li><button class="exp" aria-label="Collapse"></button><label><input type="checkbox" checked>Dawei_dt_railway</label></li>
                    <li class="sym"><svg viewBox="0 0 15 16"><path d="M0 12.500h14M0 11.500h1" stroke="#000"/></svg>Railway</li>
                    <li><button class="exp" aria-label="Collapse"></button><label><input type="checkbox" checked>Township_Bd</label></li>
                    <li class="sym"><svg viewBox="0 0 15 16"><path d="M0 12.500h1M2 12.500h1M4 12.500h1M9 12.500h5" stroke="#000"/></svg>Township boundary</li>
                    <li><button class="exp" aria-label="Collapse"></button><label><input type="checkbox" checked>Dawei_dt_Road</label></li>
                    <li class="sym"><svg viewBox="0 0 15 16"><path d="M0 12.500h14" stroke="#f03c1e"/></svg>Road</li>
                    <li><button class="exp" aria-label="Collapse"></button><label><input type="checkbox" checked>Thai PAs</label></li>
                    <li class="sub"><button class="exp" aria-label="Collapse"></button><label><input type="checkbox" checked>Protected Area of Thailand</label></li>
                    <li class="sub sym"><i class="swatch cyan"></i></li>
                    <li class="sub"><button class="exp plus" aria-label="Expand"></button><label><input type="checkbox" checked>wildlife_sanctuary</label></li>
                    <li class="sub"><button class="exp plus" aria-label="Expand"></button><label><input type="checkbox" checked>national_park</label></li>
                    <li><button class="exp" aria-label="Collapse"></button><label><input type="checkbox" checked>asian_bd</label></li>
                    <li class="sym"><i class="swatch cream"></i></li>
                    <li><button class="exp" aria-label="Collapse"></button><label><input type="checkbox" checked>Dawei_Dt_RF_PPF</label></li>
                    <li class="sym"><i class="swatch reserve"></i>RF/PPF</li>
                    <li><button class="exp" aria-label="Collapse"></button><label><input type="checkbox" checked>UTM_DSP</label></li>
                    <li class="sym"><i class="swatch sez"><svg viewBox="0 0 13 9"><path d="M0 1l8 8M0 9l8-8 5 5" fill="none" stroke="#000"/></svg></i><mark>SEZ area</mark></li>
                    <li><button class="exp" aria-label="Collapse"></button><label><input type="checkbox" checked>2017_ve2ra_final.tif</label></li>
                    <li class="sym"><i class="swatch water"></i>Water</li>
                    <li class="sym"><i class="swatch urban"></i>Urban</li>
                </ul>
                <div class="vscroll"><svg><use href="#sb"/></svg><i class="track"><i class="thumb"></i></i><svg class="down"><use href="#sb"/></svg></div>
            </div>
        </section>

        <section class="layout-view">
            <div class="hruler"><svg id="hruler"></svg></div>
            <div class="vruler"><svg id="vruler"></svg></div>
            <div class="paper">
                <canvas id="cover" width="294" height="387"></canvas>
                <!-- sheet drawing, 3 units per screen pixel -->
                <svg class="sheet" viewBox="3 105 978 1386" fill="none" stroke-width="3">
                    <defs>
                        <clipPath id="frame"><path d="M50 257H935V1420H50z"/></clipPath>
                        <clipPath id="inset"><path d="M617 452h309v313H617z"/></clipPath>
                        <pattern id="check" width="12" height="12" patternUnits="userSpaceOnUse"><path d="M0 0h6v6H0zM6 6h6v6H6z" fill="#000"/></pattern>
                        <filter id="ragged" x="-5%" y="-5%" width="110%" height="110%">
                            <feTurbulence type="fractalNoise" baseFrequency=".04" numOctaves="2" seed="4"/>
                            <feDisplacementMap in="SourceGraphic" scale="24" xChannelSelector="R" yChannelSelector="G"/>
                        </filter>
                    </defs>
                    <g stroke="#000" shape-rendering="crispEdges">
                        <path d="M4.500 106.500H979.500V1489.500H4.500z"/>
                        <path d="M28.500 142.500H955.500V1453.500H28.500z"/>
                    </g>
                    <text x="490" y="204" class="map-title">Forest Cover Map of Dawei District(Tanintharyi Region)</text>
                    <path d="M43.500 250.500H940.500V1426.500H43.500z" stroke="#a8a8a8" stroke-dasharray="9 6"/>
                    <g stroke="#5a92ff" stroke-width="6" stroke-dasharray="6 2 9 1">
                        <path d="M168 245h42M366 245h48M570 245h48M774 245h42M168 1428h42M366 1428h48M570 1428h48M774 1428h42"/>
                        <path d="M39 306v42M39 507v48M39 711v45M39 915v42M39 1116v48M39 1320v48M942 306v42M942 507v48M942 711v45M942 915v42M942 1116v48M942 1320v48"/>
                    </g>
                    <g clip-path="url(#frame)">
                        <g filter="url(#ragged)">
                            <g stroke="#00ffc5" stroke-width="4">
                                <path d="M388 258l-5 30-10 27 15 13-3 60 10 32 23 12 15 52 25-2 20-30 20 10 12-17 20 25 8 12"/>
                                <path d="M600 258l18 40 17 12 5 35 25 17 14-12 18-24h84l14-36 5-30M780 325l-4 40 6 85M795 287l35 8 42 4 28 20 32-3"/>
                                <path d="M570 342l-16 8 14 8-2 12h39l26 4 22 18M605 372l4 46-12 34-36 10-16 26 2 70 14 52 40-6 14 12M566 370l-10 15-18 15-6 48 12 22M516 470l22 12-26 10 30 10-18 10 20 12-30 12 36-4M526 500l24 30"/>
                                <path d="M640 378l30-6 16 10v28l-14 22-22-14zM740 345l8-8 6 16-14 4zM700 410l3 40M830 452l2-32 20-22 34-6-8 18 10 34M515 662l18-28 34-26 44 8"/>
                                <path d="M610 766l22 22 26 14 14-34 58-4 12 24 30 2 12-24 36-2 22 28 40 8 30-12 24 14M700 770l14-14 16 10M800 764l30-8 28 14M870 1420l26-30 10-60"/>
                            </g>
                            <path stroke="#ff0" stroke-width="5" stroke-dasharray="14 6" d="M302 258l35 42-10 40 20 20-10 40 15 40 30 50 30 40 50 40 20 50 30 30 20 40 20 35 50 40 40 30 50 30 45 40 40 10 10 40 35 60 45 25 5 65 30 35 3 95 15 40 7 60-10 40 15 50-5 35"/>
                            <path stroke="#222" stroke-width="4" stroke-dasharray="10 3" d="M306 258l35 42-10 40 20 20-10 40 15 40 30 50 30 40 50 40 20 50 30 30 20 40 20 35 50 40 40 30 50 30 45 40 40 10 10 40 35 60 45 25 5 65 30 35 3 95 15 40 7 60-10 40 15 50-5 35"/>
                            <g stroke="#267300" stroke-width="4">
                                <path d="M145 290l2 110 22 60 20 20 14 30 10 60-10 40 30 20 10 40-20 50 20 10M172 290l-2 60 20 30 8 70 30 10M200 330l16 10-4 24-14 4M208 370l24 50 10 50 26 50-2 50-24 10"/>
                                <path d="M340 430l-32 2-4 90-2 50 20 30-18 40 0 64 30 18 40-10 26 24 40-18 34 12 22-24 60 0"/>
                                <path d="M262 775l-4 90 8 60-24 30 10 60-20 50 12 40 44 24 4 50-22 50 12 6M228 900l4 60 14 40"/>
                                <path d="M404 868l34-8 8 16-4 34-16 14 26 16 30-6 22-20 26 0-4-18 8-5-40 8M424 940v70l40 14 30-10 26 36-30 8 26 20-12 26-30 18-32-4M372 1036l24-36 14 20-8 30-20 6zM448 1138l-2 46 30 4 14-20 40 6 36-12 12-32-20-10 4-46 40-10 18-4"/>
                                <path d="M614 1064l14 46-14 30 36 40 16 46 20 36M560 1080l-30-6-24 16-50 10"/>
                                <path fill="#5fb932" d="M60 826l12-6 6 16-8 16-10-6zM66 858l12-4-2 12-8 2zM134 970l4 30 8 26-8 34-4-4 2-30zM54 748l8 4 0 20-8 4zM66 755l12-2-2 14z"/>
                            </g>
                            <g stroke="#000">
                                <path d="M50 398l40 4 2-26 16-12 6-84 28 2 10 30 4 70 26 60 4 50 18 30 10 36 20 24 70-12 18 18-12 20-4 160 14 60 2 90 8 30 28 132 40 8 20 70 40 60 40 76 10 22-46 50"/>
                                <path d="M142 284l60-16 20 30 18 30 70 14"/>
                                <path stroke-dasharray="12 7 4 7" d="M60 805l160-4M300 1224l28-6-4-100M296 1408l190-32"/>
                                <path stroke-dasharray="10 6" d="M466 576l-66 4-12 40 14 40-8 70 4 40-30 20-30-10-20 20M330 930l36-20 80 40 40 20 24 60 20 34 30 14-2 50 14 40-4 40 20 30"/>
                                <path d="M526 1332l26-24 20-56 26-24 90 30 110 60v36l90-12 30 16"/>
                            </g>
                            <g stroke="#ff3200" stroke-width="4">
                                <path d="M146 290l36 12 16 70 40 70 24 50 10 50 26 26 2 120 12 50 26 20 50-2 50 16 30 36 40 0 40-28 30 10 50 10 50 36 50 24 30 36 40 50 20 20 30-4"/>
                                <path stroke-dasharray="9 5" d="M150 286l56-20 20 30 18 30 60 14 22-10"/>
                                <path d="M488 830l4 50 46 50 30 90 38 18 10 20 42 8 10-30 36-6 28-4 70-2 10-44-8-16M606 1036l20 44 24 20 60-14 40 24 54 30"/>
                                <path d="M240 750l60-4 24 14 6 80-40 20M340 892l30-10 34-56 84 6M404 1086l60-10 60-30M248 840l40 28 10 50-44 26M292 1020l-6 84 14 30-20 68M526 1330l-26-36-88-152"/>
                                <path stroke-dasharray="6 9" d="M598 1226l90 30 110 60v36l90-12"/>
                            </g>
                        </g>
                        <path fill="#ff0" d="M236 735l4-40 14 10 24 30 6 30-44 40-30-20-16-36z"/>
                        <path fill="url(#check)" d="M238 735l22-24 18 24 4 30-14 14-24 24-10 14-26-36-12-32z"/>
                        <path stroke="#000" stroke-width="4" d="M236 684l14 6-4 16 14 12"/>
                        <g id="crosses" stroke="#000" shape-rendering="crispEdges"></g>

                        <!-- locator inset -->
                        <g clip-path="url(#inset)">
                            <path fill="#bee8ff" d="M617 452h309v313H617z"/>
                            <g filter="url(#ragged)">
                                <path fill="#ffffbe" stroke="#005ce6" stroke-width="5" d="M590 420h370v158l-58 6-20 24 0 24 22 18 10 30-10 34-30 20-14 8-8-18-22-18-4-18-24 8-8 26 2 20 24 20-14 6-16-30-8-22 4-30-18-42-32 4-6-38-14-22-26-12-26 8-24 28-26 6-18 20-42 12z"/>
                                <g stroke="#005ce6" stroke-width="5">
                                    <path d="M606 486l38 14 34 10 14-8 40 4 34-14 34 10-4 20-12-6-8 18-16 20-8 24-20 20M678 512l-2 34 12-8 6 20 16-8 10 18-14 12M606 514l70 8M684 530l40 4"/>
                                    <path d="M784 508l10 20 12 30 12 14-10 16-22 10-6 30 20 20-4 24M812 576l30 6 26-16 26 10 42-2M820 590l20 18 18-14 10 28 28 30-4 22-50 0-4 24M806 604l24 10"/>
                                    <path stroke-width="9" d="M690 556l14 20 10-14 10 16M735 590l12 46M792 676l2 34 10 24M800 700l6 20M812 720l-4 26 24 10"/>
                                </g>
                            </g>
                            <path d="M785 664h15v11h-15z" stroke="#f00" stroke-width="4"/>
                            <path d="M724 528h20M802 540h22M742 582h44M802 639h34" stroke="#000" stroke-width="5" stroke-dasharray="4 1"/>
                        </g>
                        <path d="M616.500 451.500h309v313h-309z" stroke="#000" shape-rendering="crispEdges"/>

                        <!-- north arrow -->
                        <g stroke="#000">
                            <circle cx="855" cy="333" r="26"/><circle cx="855" cy="333" r="14" stroke-width="2"/>
                            <path d="M855 300v66M822 333h66M834 312l42 42M876 312l-42 42" stroke-width="2"/>
                            <path fill="#000" d="M855 303l5 25h-10zM855 363l5-25h-10zM825 333l25-5v10zM885 333l-25-5v10z" stroke="none"/>
                        </g>
                        <g class="map-text">
                            <text x="855" y="298">N</text><text x="855" y="378">S</text><text x="816" y="339">W</text><text x="893" y="339">E</text>
                            <text x="858" y="404">1:850,000</text>
                            <text x="846" y="827">Thailand</text>
                        </g>

                        <!-- legend -->
                        <path d="M56 1185q18-14 20 4 12-12 20-4l-4 24-16-6-14 6z" fill="#2d6a70"/>
                        <path d="M60 1217h30" stroke="#000" stroke-width="6" stroke-dasharray="6 2"/>
                        <path fill="#bee8ff" d="M52 1224h227v193H52z"/>
                        <g stroke="#000" stroke-width="4">
                            <path stroke-dasharray="5 3" d="M54 1234h24M84 1249h54M84 1264h62M84 1279h78M84 1294h28M84 1309h70M84 1327h18M84 1342h94M84 1357h28M212 1249h22M212 1264h18M212 1279h40M212 1294h38M212 1309h26M212 1327h30M212 1342h32M212 1357h40M212 1372h34M212 1387h66M212 1405h34"/>
                            <path d="M54 1294h24M54 1309h6M66 1309h12M63 1249h6"/>
                        </g>
                        <path d="M51 1264h27" stroke="#e00" stroke-dasharray="9 3"/>
                        <path d="M51 1279h27" stroke="#dd0" stroke-dasharray="6 3"/>
                        <path d="M51 1327h27" stroke="#ff3200"/>
                        <path d="M54 1337h26v11H54z" stroke="#00ffc5" stroke-width="4"/>
                        <path d="M54 1352h26v11H54z" stroke="#267300" stroke-width="4"/>
                        <g id="classes" stroke="#6e6e6e" stroke-width="4"></g>
                        <path d="M756 1401h153v14H756z" fill="#fff"/>
                        <path d="M760 1410h108v10H760z" fill="#000"/><path d="M788 1414h26" stroke="#fff"/>
                    </g>
                    <path d="M49.500 256.500H934.500V1420.500H49.500z" stroke="#000" shape-rendering="crispEdges"/>
                </svg>
            </div>
            <div class="vscroll"><svg><use href="#sb"/></svg><i class="track"><i class="thumb"></i></i><svg class="down"><use href="#sb"/></svg></div>
            <div class="hscroll">
                <button aria-label="Data View"><svg viewBox="0 0 12 12"><path d="M1.500 1.500h9v9h-9z" fill="#dfe8c9" stroke="#333"/><path d="M3 9l5-5v3z" fill="#5a9a3a"/></svg></button>
                <button class="on" aria-label="Layout View"><svg viewBox="0 0 12 12"><path d="M2 1.500h6l2 2v7H2z" fill="#fff" stroke="#345"/><path d="M4 5.500h4M4 7.500h4" stroke="#357"/></svg></button>
                <i class="bar"></i>
                <button aria-label="Refresh"><svg viewBox="0 0 12 12"><path d="M2 6q1-4 5-4l2 2M10 6q-1 4-5 4L3 8" fill="none" stroke="#1b5a9e" stroke-width="1.500"/><path d="M10 1v4H6zM2 11V7h4z" fill="#1b5a9e"/></svg></button>
                <button aria-label="Pause Drawing"><svg viewBox="0 0 12 12"><path d="M4 3v6M8 3v6" stroke="#1b5a9e" stroke-width="2"/></svg></button>
                <svg class="lt"><use href="#sb"/></svg><i class="track"><i class="thumb"></i></i><svg class="gt"><use href="#sb"/></svg>
            </div>
        </section>

        <aside class="dock right">
            <button class="tab"><svg class="icon"><use href="#win-catalog"/></svg><span>Catalog</span></button>
            <button class="tab"><svg class="icon"><use href="#win-search"/></svg><span>Search</span></button>
            <button class="tab apart"><svg class="icon"><use href="#create"/></svg><span>Create Features</span></button>
        </aside>
    </main>

    <div class="toolrow bottomrow">
        <div class="toolbar" role="toolbar" aria-label="Layout">
            <i class="grip"></i>
            <button class="tool" aria-label="Zoom In"><svg><use href="#lay-in"/></svg></button>
            <button class="tool" aria-label="Zoom Out"><svg><use href="#lay-out"/></svg></button>
            <button class="tool" aria-label="Pan"><svg><use href="#lay-pan"/></svg></button>
            <button class="tool" aria-label="Zoom Whole Page"><svg><use href="#lay-full"/></svg></button>
            <button class="tool" aria-label="Zoom to 100%"><svg><use href="#lay-100"/></svg></button>
            <i class="sep"></i>
            <button class="tool" aria-label="Fixed Zoom In"><svg><use href="#lay-fixin"/></svg></button>
            <button class="tool" aria-label="Fixed Zoom Out"><svg><use href="#lay-fixout"/></svg></button>
            <i class="sep"></i>
            <button class="tool" aria-label="Back"><svg><use href="#lay-back"/></svg></button>
            <button class="tool" aria-label="Forward"><svg><use href="#lay-fwd"/></svg></button>
            <span class="combo percent"><select aria-label="Zoom"><option>41%</option></select><svg><use href="#chev"/></svg></span>
            <i class="sep"></i>
            <button class="tool" aria-label="Draft Mode"><svg><use href="#draft"/></svg></button>
            <button class="tool" aria-label="Focus Data Frame"><svg><use href="#focus"/></svg></button>
            <button class="tool" aria-label="Change Layout"><svg><use href="#layout-chg"/></svg></button>
            <button class="tool" aria-label="Data Driven Pages"><svg><use href="#driven"/></svg></button>
            <button class="more" aria-label="Toolbar Options"><svg><use href="#more"/></svg></button>
        </div>
        <div class="toolbar" role="toolbar" aria-label="Draw">
            <i class="grip"></i>
            <button class="text-tool">Drawing<svg><use href="#arrow"/></svg></button>
            <button class="tool on" aria-label="Select Elements"><svg><use href="#pointer"/></svg></button>
            <button class="tool" aria-label="Rotate"><svg><use href="#rot-circle"/></svg></button>
            <button class="tool" aria-label="Zoom To Selected"><svg><use href="#zoom-sel"/></svg></button>
            <i class="sep"></i>
            <button class="tool drop" aria-label="Rectangle"><svg><use href="#rect"/></svg><svg class="arrow"><use href="#arrow"/></svg></button>
            <button class="tool drop letter" aria-label="Text"><b>A</b><svg class="arrow"><use href="#arrow"/></svg></button>
            <button class="tool" aria-label="Edit Vertices"><svg><use href="#vertices"/></svg></button>
            <i class="sep"></i>
            <span class="combo font"><svg class="icon"><use href="#font-o"/></svg><select aria-label="Font"><option>Arial</option></select><svg><use href="#chev"/></svg></span>
            <span class="combo size"><select aria-label="Font size"><option>10</option></select><svg><use href="#chev"/></svg></span>
            <button class="tool style" aria-label="Bold"><b>B</b></button>
            <button class="tool style" aria-label="Italic"><em>I</em></button>
            <button class="tool style" aria-label="Underline"><u>U</u></button>
            <i class="sep"></i>
            <button class="tool drop tint black" aria-label="Font Color"><b>A</b><svg class="arrow"><use href="#arrow"/></svg></button>
            <button class="tool drop tint cream" aria-label="Fill Color"><svg><use href="#bucket"/></svg><svg class="arrow"><use href="#arrow"/></svg></button>
            <button class="tool drop tint black" aria-label="Line Color"><svg><use href="#pen"/></svg><svg class="arrow"><use href="#arrow"/></svg></button>
            <button class="tool drop tint lime" aria-label="Marker Color"><i class="dot"></i><svg class="arrow"><use href="#arrow"/></svg></button>
            <button class="more" aria-label="Toolbar Options"><svg><use href="#more"/></svg></button>
        </div>
    </div>

    <footer class="statusbar">
        <span></span><span class="w1"></span><span class="w2"></span><span class="w3"></span><output>-8.76&nbsp; 3.17 Inches</output>
    </footer>

    <div class="taskbar">
        <button aria-label="Start"><svg viewBox="0 0 16 16"><path d="M0 2.300L6.500 1.400V7.600H0zM7.300 1.300L16 0v7.600H7.300zM0 8.400h6.500v6.200L0 13.700zM7.300 8.400H16V16l-8.700-1.300z" fill="#fff"/></svg></button>
        <button aria-label="Search"><svg viewBox="0 0 16 16"><circle cx="10" cy="6" r="5.300" fill="none" stroke="#fff" stroke-width="1.300"/><path d="M6.200 10L.5 15.500" stroke="#fff" stroke-width="1.500"/></svg></button>
        <button class="view" aria-label="Task View"><svg class="wide" viewBox="0 0 20 16"><path d="M5 1.500h10v13H5zM3 3.500H.7v9H3M17 3.500h2.300v9H17" fill="none" stroke="#fff" stroke-width="1.200"/></svg></button>
        <button class="app" aria-label="File Explorer"><svg viewBox="0 0 22 20"><path d="M1 1h8l1 2h11v15H1z" fill="#f5c84c"/><path d="M1 5h20v13H1z" fill="#fde293"/><path d="M4 19v-7q0-1 1-1h12q1 0 1 1v7h-4v-4H8v4z" fill="#3ba9e4"/></svg></button>
        <button class="app" aria-label="Chrome"><svg viewBox="0 0 22 22"><circle cx="11" cy="11" r="11" fill="#fbc116"/><path d="M1.500 5.500A11 11 0 0 0 10 22l5.500-8.500-9-.5z" fill="#119d58"/><path d="M11 6H20.800A11 11 0 0 0 1.500 5.500L6.500 13z" fill="#dc4437"/><circle cx="11" cy="11" r="5.200" fill="#fff"/><circle cx="11" cy="11" r="4.100" fill="#4285f4"/></svg></button>
        <button class="app" aria-label="Bg"><svg viewBox="0 0 22 22"><rect x=".5" y=".5" width="21" height="21" rx="2" fill="url(#leaf)"/><text x="11" y="15" class="bg-logo">Bg</text></svg></button>
        <button class="app active" aria-label="ArcMap"><svg><use href="#arcmap"/></svg></button>
        <button class="app" aria-label="Word"><svg viewBox="0 0 22 22"><path d="M.5.500h17l4 4v17H.5z" fill="#dce8f8" stroke="#3a62ad"/><path d="M1 1h15v16L1 18z" fill="#2a5db4"/><path d="M13 19h7M17 8h3M17 11h3M17 14h3" stroke="#7a9bd6"/><text x="8" y="14" class="word-logo">W</text></svg></button>
        <div class="tray">
            <svg viewBox="0 0 16 16"><path d="M2.500 11L8 5.500 13.500 11" fill="none" stroke="#fff" stroke-width="1.300"/></svg>
            <svg viewBox="0 0 16 16"><path d="M5 5.500h9.500v7H5zM3 2v3M1.500 5h3v3h-3zM3 8v4h2" fill="none" stroke="#fff" stroke-width="1.300"/><path d="M8 7h3v4H8z" fill="#fff"/></svg>
            <svg viewBox="0 0 16 16"><path d="M3 14q1-9 12-10M6 14q1-6 9-7M9 14q1-3 6-4M12 14h2" fill="none" stroke="#777" stroke-width="1.500"/><path d="M3 0v6M0 3h6M1 1l4 4M5 1L1 5" stroke="#fff"/></svg>
            <svg viewBox="0 0 16 16"><path d="M1 6h2l4-4v12l-4-4H1zM10 6l4 4M14 6l-4 4" fill="none" stroke="#fff" stroke-width="1.200"/></svg>
            <span>ENG</span>
            <time>13:42<br>30/12/2017</time>
            <svg class="note" viewBox="0 0 16 16"><path d="M1 1.500h14v10h-4l-3 3-3-3H1z" fill="none" stroke="#fff" stroke-width="1.200"/></svg>
            <i class="peek"></i>
        </div>
    </div>
    <script src="script.js"></script>
</body>
</html>
```
FILE: styles.css
```css
* {
    box-sizing: border-box;
    margin: 0;
    padding: 0;
}
body {
    height: 100vh;
    display: flex;
    flex-direction: column;
    overflow: hidden;
    background: linear-gradient(90deg, #efefef, #fbfbfb 75%);
    color: #000;
    font: 12px/16px Lato, "Noto Sans", sans-serif;
}
button {
    border: 0;
    background: none;
    font: inherit;
    color: inherit;
}
h1, h2 {
    font-size: 12px;
    font-weight: 400;
}
.sprite {
    position: absolute;
    width: 0;
    height: 0;
}
.icon {
    width: 16px;
    height: 16px;
    display: block;
    flex: none;
}

/* title and menu */
.titlebar {
    height: 24px;
    flex: none;
    background: #fff;
    display: flex;
    align-items: center;
    gap: 5px;
    padding: 0 2px;
}
.win-btns {
    margin-left: auto;
    display: flex;
}
.win-btns button {
    width: 48px;
    height: 24px;
    display: grid;
    place-items: center;
}
.win-btns svg {
    width: 12px;
    height: 12px;
}
.menubar {
    height: 30px;
    flex: none;
    display: flex;
    align-items: center;
    gap: 17px;
    padding-left: 12px;
}

/* toolbars */
.toolrow {
    flex: none;
    height: 28px;
    display: flex;
    gap: 20px;
    padding-left: 8px;
}
.labelrow {
    height: 33px;
    gap: 5px;
    padding: 2px 0 0 430px;
}
.toolbar {
    display: flex;
    align-items: center;
    background: linear-gradient(#fdfdfd, #f0f0f0);
    border-radius: 3px;
}
.grip {
    width: 2px;
    height: 16px;
    margin: 0 2px;
    background: repeating-linear-gradient(#bbb 0 2px, transparent 2px 4px);
    flex: none;
}
.sep {
    width: 1px;
    height: 18px;
    margin: 0 3px 0 2px;
    background: #bdbdbd;
    flex: none;
}
.tool {
    width: 22px;
    height: 22px;
    display: flex;
    align-items: center;
    justify-content: center;
    flex: none;
}
.tool svg {
    width: 16px;
    height: 16px;
    flex: none;
}
.tool.drop {
    width: 34px;
}
.tool .arrow,
.text-tool svg {
    width: 10px;
    height: 10px;
    margin-left: 2px;
    flex: none;
}
.off .arrow {
    opacity: .4;
}
.tool.on {
    background: #deebf6;
    border: 1px solid #0078d7;
}
.text-tool {
    display: flex;
    align-items: center;
    padding: 0 2px 0 6px;
}
.text-tool svg {
    margin-left: 0;
}
.more {
    width: 11px;
    align-self: stretch;
    margin-left: 2px;
    background: linear-gradient(#f0f0f0, #a6a6a6);
    display: flex;
    align-items: flex-end;
    justify-content: center;
    flex: none;
}
.more svg {
    width: 10px;
    height: 10px;
    flex: none;
}
.combo {
    height: 22px;
    border: 1px solid #767676;
    background: #fff;
    display: flex;
    align-items: center;
    font-family: Roboto, "Liberation Sans", sans-serif;
    font-size: 11px;
    flex: none;
}
.combo select {
    appearance: none;
    border: 0;
    background: none;
    font: inherit;
    color: #000;
    flex: 1;
    min-width: 0;
    padding-left: 3px;
}
.combo > svg:last-child {
    width: 10px;
    height: 10px;
    margin-right: 3px;
    flex: none;
}
.scale {
    width: 149px;
}
.fast {
    width: 65px;
    height: 28px;
    background: #ccc;
    border-color: #bfbfbf;
    font-family: inherit;
    font-size: 12px;
}
.fast select {
    color: #808080;
    opacity: 1;
}
.layer {
    width: 178px;
    height: 20px;
    margin-right: 2px;
    border: 2px solid #777;
    border-right-color: #ddd;
    border-bottom-color: #ddd;
    font-family: inherit;
    font-size: 12px;
}
.combo.layer > svg:last-child {
    width: 15px;
    height: 16px;
    margin: 0;
}
.percent {
    width: 60px;
}
.font {
    width: 171px;
    padding-left: 2px;
}
.size {
    width: 46px;
}
.spin {
    width: 60px;
    height: 20px;
    border: 1px solid #767676;
    background: #fff;
    display: flex;
    font-family: Roboto, "Liberation Sans", sans-serif;
    font-size: 11px;
}
.spin input {
    flex: 1;
    min-width: 0;
    border: 0;
    padding-left: 3px;
    font: inherit;
}
.spin span {
    width: 15px;
    display: flex;
    flex-direction: column;
}
.spin button {
    flex: 1;
    min-height: 0;
    border: 1px solid #aaa;
    background: #f0f0f0;
    display: grid;
    place-items: center;
}
.spin svg {
    width: 8px;
    height: 6px;
}
.letter b,
.tint b {
    width: 16px;
    font: bold 17px/18px "Liberation Serif", serif;
}
.style {
    font: 14px/16px "Liberation Serif", serif;
}
.style u {
    font-weight: 700;
}
.tool.tint {
    width: 38px;
    height: 26px;
    padding-bottom: 7px;
    background: linear-gradient(#000, #000) 3px 18px / 18px 3px no-repeat;
}
.tool.tint .arrow {
    margin: 4px 0 0 6px;
}
.tool.tint.cream {
    background-image: linear-gradient(#ffffbe, #ffffbe);
}
.tool.tint.lime {
    background-image: linear-gradient(#4cff00, #4cff00);
}
.dot {
    width: 6px;
    height: 6px;
    margin: 0 5px;
    border-radius: 50%;
    background: #0000f0;
}

/* working area */
main {
    flex: 1;
    min-height: 0;
    display: flex;
    padding-top: 2px;
}
.dock {
    width: 26px;
    flex: none;
    padding-top: 1px;
}
.tab {
    width: 24px;
    padding: 4px 0 5px 3px;
    border: 1px solid #9a9a9a;
    border-left: 0;
    border-radius: 0 4px 4px 0;
    background: #f0f0f0;
    color: #6a6a6a;
    display: flex;
    flex-direction: column;
    align-items: center;
    gap: 3px;
    font: 12px/16px Roboto, "Liberation Sans", sans-serif;
}
.tab span {
    writing-mode: vertical-rl;
    white-space: nowrap;
}
.right {
    margin-left: 4px;
    width: 24px;
}
.right .tab {
    border: 1px solid #9a9a9a;
    border-right: 0;
    border-radius: 4px 0 0 4px;
    padding: 4px 2px 5px 2px;
}
.right .apart {
    margin-top: 13px;
}
.toc {
    width: 253px;
    flex: none;
    display: flex;
    flex-direction: column;
    margin-right: 5px;
}
.toc header {
    height: 25px;
    flex: none;
    display: flex;
    align-items: center;
    padding: 0 1px 0 4px;
    background: linear-gradient(90deg, #9ab4d2, #bcd3ec);
}
.toc h2 {
    flex: 1;
}
.toc-tools {
    height: 26px;
    flex: none;
    display: flex;
    align-items: center;
    padding-left: 4px;
    background: linear-gradient(#fdfdfd, #f0f0f0);
}
.tree-box {
    flex: 1;
    min-height: 0;
    display: flex;
    padding: 1px 2px 1px 0;
    border: 1px solid #828790;
    background: #fff;
}
.tree {
    flex: 1;
    min-width: 0;
    overflow: hidden;
    list-style: none;
    white-space: nowrap;
}
.tree li {
    height: 24px;
    display: flex;
    align-items: center;
    padding-left: 27px;
}
.tree .sub {
    padding-left: 46px;
}
.tree .sym {
    padding-left: 59px;
}
.tree .sub.sym {
    padding-left: 78px;
}
.exp {
    width: 9px;
    height: 9px;
    margin: 2px 8px 0 0;
    border: 1px solid #989898;
    border-radius: 1px;
    background: linear-gradient(#4b63a7, #4b63a7) center / 5px 1px no-repeat, #f4f4f4;
    flex: none;
}
.exp.plus {
    background: linear-gradient(#4b63a7, #4b63a7) center / 5px 1px no-repeat, linear-gradient(#4b63a7, #4b63a7) center / 1px 5px no-repeat, #f4f4f4;
}
.tree label {
    display: flex;
    align-items: center;
    gap: 8px;
}
.tree input {
    appearance: none;
    width: 11px;
    height: 11px;
    margin-top: 2px;
    border: 1px solid #000;
    display: grid;
    place-items: center;
}
.tree input:checked::before {
    content: "";
    width: 7px;
    height: 4px;
    border: solid #000;
    border-width: 0 0 2px 2px;
    transform: rotate(-45deg);
    margin-bottom: 2px;
}
.sym > svg {
    width: 15px;
    height: 16px;
    margin-right: 3px;
    shape-rendering: crispEdges;
    flex: none;
}
.swatch {
    width: 15px;
    height: 11px;
    margin: 9px 3px 0 0;
    border: 1px solid #6e6e6e;
    flex: none;
}
.swatch.cyan {
    border-color: #00ffc5;
}
.swatch.cream {
    background: #ffffbe;
}
.swatch.reserve {
    border-color: #267300;
}
.swatch.sez {
    border-color: #ff0;
}
.swatch.water {
    background: #338eff;
}
.swatch.urban {
    background: #ff8e8e;
}
.swatch svg {
    display: block;
    width: 13px;
    height: 9px;
}
mark {
    background: #0078d7;
    color: #fff;
    outline: 1px dotted #e08030;
    height: 20px;
    line-height: 18px;
    padding-right: 1px;
}

/* scroll bars */
.vscroll {
    width: 17px;
    background: #f0f0f0;
    display: flex;
    flex-direction: column;
    align-items: center;
    padding: 4px 0;
    flex: none;
}
.vscroll svg,
.hscroll > svg {
    width: 10px;
    height: 10px;
    flex: none;
}
.track {
    flex: 1;
    position: relative;
    align-self: stretch;
}
.thumb {
    position: absolute;
    background: #cdcdcd;
}
.vscroll .thumb {
    left: 1px;
    right: 1px;
}
.toc .thumb {
    top: 17%;
    height: 43%;
}
.layout-view .vscroll .thumb {
    top: 22%;
    height: 55%;
}
.down {
    transform: rotate(180deg);
}
.hscroll {
    grid-column: 1 / 4;
    background: #f0f0f0;
    display: flex;
    align-items: center;
    padding-right: 20px;
}
.hscroll button {
    width: 18px;
    height: 16px;
    display: grid;
    place-items: center;
}
.hscroll button svg {
    width: 10px;
    height: 10px;
}
.hscroll .on {
    border: 1px solid #90c8f6;
    background: #c0dcf3;
}
.bar {
    width: 1px;
    height: 12px;
    margin: 0 2px;
    background: #777;
}
.lt {
    transform: rotate(-90deg);
    margin: 0 4px 0 3px;
}
.gt {
    transform: rotate(90deg);
    margin-left: 4px;
}
.hscroll .thumb {
    top: 2px;
    bottom: 1px;
    left: 0;
    width: 100%;
}

/* layout view */
.layout-view {
    flex: 1;
    min-width: 0;
    display: grid;
    grid-template: 22px 1fr 17px / 21px 1fr 17px;
    border-left: 1px solid #6b6b6b;
    border-top: 2px solid #808080;
    background: #f0f0f0;
}
.hruler {
    grid-column: 1 / 3;
    border-bottom: 2px solid #808080;
    padding: 1px 0 0 21px;
    display: flex;
    justify-content: center;
    font: 12px/12px "Liberation Sans", sans-serif;
}
.vruler {
    grid-row: 2;
    border-right: 2px solid #808080;
    display: flex;
    justify-content: center;
    align-items: center;
    font: 12px/12px "Liberation Sans", sans-serif;
    overflow: hidden;
}
.hruler svg,
.vruler svg {
    background: #fff;
    border: 1px solid #a0a0a0;
    flex: none;
}
.hruler svg {
    width: 324px;
    height: 16px;
}
.vruler svg {
    width: 16px;
    height: 460px;
}
.paper {
    grid-row: 2;
    grid-column: 2;
    background: #fff;
    display: grid;
    place-content: center;
    min-height: 0;
    overflow: hidden;
}
.layout-view > .vscroll {
    grid-row: 1 / 3;
    grid-column: 3;
}
#cover,
.sheet {
    grid-area: 1 / 1;
}
#cover {
    margin: 51px 16px 0;
    display: block;
}
.sheet {
    width: 326px;
    height: 462px;
}
.map-title,
.map-text {
    font-family: "Liberation Sans", sans-serif;
    text-anchor: middle;
    fill: #000;
}
.map-title {
    font-size: 25px;
    font-weight: 700;
}
.map-text {
    font-size: 18px;
}

/* bottom */
.bottomrow {
    height: 31px;
    gap: 3px;
    padding: 1px 0 0 12px;
}
.statusbar {
    height: 26px;
    flex: none;
    display: flex;
    align-items: stretch;
    gap: 3px;
    padding-top: 2px;
    background: #f0f0f0;
}
.statusbar span,
.statusbar output {
    border: 1px solid #f8f8f8;
}
.statusbar span:first-child {
    flex: 1;
}
.w1 {
    width: 127px;
}
.w2 {
    width: 17px;
}
.w3 {
    width: 254px;
}
.statusbar output {
    width: 255px;
    padding-left: 3px;
    line-height: 20px;
}
.taskbar {
    height: 40px;
    flex: none;
    display: flex;
    background: #010409;
    color: #fff;
}
.taskbar button {
    width: 48px;
    display: grid;
    place-items: center;
}
.taskbar button svg {
    width: 16px;
    height: 16px;
}
.taskbar button .wide {
    width: 20px;
}
.taskbar .view {
    margin-right: 2px;
}
.taskbar .app {
    width: 49px;
    background: linear-gradient(#76b9ed, #76b9ed) center bottom / 40px 2px no-repeat;
}
.taskbar .app svg {
    width: 22px;
    height: 22px;
}
.taskbar .app.active {
    background: linear-gradient(#76b9ed, #76b9ed) center bottom / 49px 2px no-repeat, #34363a;
}
.bg-logo {
    fill: #fff;
    font: bold 13px "Liberation Serif", serif;
    text-anchor: middle;
}
.word-logo {
    fill: #fff;
    font: bold 14px "Liberation Sans", sans-serif;
    text-anchor: middle;
}
.tray {
    margin-left: auto;
    display: flex;
    align-items: center;
    gap: 8px;
}
.tray svg {
    width: 16px;
    height: 16px;
}
.tray time {
    text-align: center;
    line-height: 19px;
    padding: 0 4px;
}
.tray .note {
    margin-left: 8px;
}
.peek {
    width: 5px;
    height: 40px;
    margin-left: 12px;
    border-left: 1px solid #555;
}
```
FILE: script.js
```js
const NS = 'http://www.w3.org/2000/svg';

const add = (parent, tag, attrs, text) => {
    const el = document.createElementNS(NS, tag);
    for (const key in attrs) el.setAttribute(key, attrs[key]);
    if (text) el.textContent = text;
    parent.appendChild(el);
};

// rulers, 39.25px to the inch
const INCH = 39.25;
const $h = document.querySelector('#hruler');
const $v = document.querySelector('#vruler');
for (let i = 1; i <= 16; i++) {
    const x = Math.round(i * INCH / 2);
    const whole = i % 2 === 0;
    add($h, 'path', { d: `M${x - 0.5} ${whole ? 3 : 12}V14`, stroke: '#000' });
    if (whole) add($h, 'text', { x: x + 2, y: 11 }, String(i / 2));
}
for (let i = 1; i <= 23; i++) {
    const y = 458 - Math.round(i * INCH / 2);
    const whole = i % 2 === 0;
    add($v, 'path', { d: `M${whole ? 3 : 12} ${y + 0.5}H14`, stroke: '#000' });
    if (whole) add($v, 'text', { transform: `translate(11 ${y - 1}) rotate(-90)` }, String(i / 2));
}

// grid crosses and legend boxes
const $crosses = document.querySelector('#crosses');
for (const y of [328.5, 529.5, 733.5, 937.5, 1138.5, 1342.5]) {
    for (const x of [190.5, 391.5, 595.5, 796.5]) {
        if (x === 190.5 && y === 1342.5) continue;
        add($crosses, 'path', { d: `M${x - 7.5} ${y}h15M${x} ${y - 7.5}v15` });
    }
}
const classes = ['#338eff', '#ffa5a5', '#ffff3c', '#ff4bdc', '#4e4e4e', '#ff8c4b', '#6ebe46', '#82ff46', '#ff4b4b', '#a0ffdc', '#9a6446'];
classes.forEach((fill, i) => {
    add(document.querySelector('#classes'), 'path', { d: `M184 ${1243 + i * 15.6}h25v11h-25z`, fill });
});

// forest cover raster
const coast = 'L60 258L68 290 76 320 64 370 76 400 74 440 88 480 96 502 114 495 118 540 132 570 150 610 165 660 174 700 180 735 190 748 216 786 240 815 250 865 240 885 226 915 240 965 230 1065 246 1105 270 1120 286 1135 270 1205 286 1220 296 1200 300 1135 290 1085 300 1035 322 960 300 890 308 870 332 930 336 980 350 1030 318 1040 310 1080 330 1110 366 1136 400 1166 416 1206 440 1246 456 1286 470 1326 486 1356 486 1422';
const east = 'L925 1422 930 1385 915 1335 925 1295 918 1235 903 1195 900 1100 870 1065 865 1000 820 975 785 915 775 875 735 865 690 825 640 795 600 765 550 735 530 690 510 650 480 620 460 570 410 530 380 490 350 440 335 400 345 360 325 340 335 300 300 258Z';
const water = new Path2D('M45 250' + coast + 'L45 1422Z');
const land = new Path2D('M60 258' + coast + east);
const creeks = new Path2D('M122 410L140 450 170 480 180 520 205 550M140 440L160 480 150 510M96 505L150 490M290 800L300 900 322 960 314 1050 300 1100');

const ctx = document.querySelector('#cover').getContext('2d');
ctx.fillStyle = '#ffffbe';
ctx.fillRect(0, 0, 294, 387);

const hash = (x, y) => {
    let n = Math.imul(x, 374761393) + Math.imul(y, 668265263) | 0;
    n = Math.imul(n ^ (n >>> 13), 1274126177);
    return ((n ^ (n >>> 16)) >>> 0) / 4294967296;
};
const smooth = (x, y, size) => {
    const gx = Math.floor(x / size), gy = Math.floor(y / size);
    const fx = x / size - gx, fy = y / size - gy;
    const top = hash(gx, gy) * (1 - fx) + hash(gx + 1, gy) * fx;
    const low = hash(gx, gy + 1) * (1 - fx) + hash(gx + 1, gy + 1) * fx;
    return top * (1 - fy) + low * fy;
};
const near = (x, y, cx, cy, rx, ry) => Math.max(0, 1 - Math.hypot((x - cx) / rx, (y - cy) / ry));

const cover = (x, y, px, py) => {
    const clump = smooth(px, py, 9) * 0.5 + smooth(px + 500, py, 4) * 0.5;
    const westLine = y < 720 ? 310 : 540;
    let bright = x < westLine ? (y < 720 ? 0.9 : 0.6) : 0.2;
    if (y < 350 && x > 235) bright = 0.2;
    const magenta = near(x, y, 150, 470, 70, 110) + near(x, y, 365, 1105, 60, 55) * 2 + near(x, y, 480, 1300, 50, 130) * 0.9 + near(x, y, 180, 650, 30, 60) + near(x, y, 75, 330, 25, 50) + near(x, y, 310, 1060, 30, 80) + near(x, y, 240, 900, 20, 60);
    const yellow = near(x, y, 270, 770, 90, 80) * 1.4 + near(x, y, 305, 960, 50, 170) * 1.3 + near(x, y, 400, 1130, 60, 60) * 0.5;
    const orange = (x < westLine ? 0.16 : 0.04) + near(x, y, 800, 1345, 110, 100) * 0.6 + near(x, y, 720, 920, 110, 90) * 0.4 + near(x, y, 820, 1120, 90, 140) * 0.2;
    const brown = near(x, y, 300, 900, 50, 120) * 0.5 + near(x, y, 525, 1400, 50, 30) + near(x, y, 140, 530, 50, 60) * 0.5;
    const pale = near(x, y, 820, 1060, 90, 140) * 0.2;
    if (hash(px + 900, py + 77) < magenta * clump * 0.8) return '#ff32dc';
    if (hash(px, py + 300) < yellow * clump * 1.1) return '#ffff32';
    if (hash(px + 40, py + 600) < brown * clump) return '#a05032';
    if (hash(px + 80, py + 900) < orange * clump * 1.5) return '#ff7d3c';
    if (hash(px + 120, py + 200) < pale) return '#a0ffe6';
    return hash(px + 7, py + 5) < bright + (clump - 0.5) * 1.2 ? '#78ff32' : '#5fb932';
};

for (let py = 0; py < 387; py++) {
    for (let px = 0; px < 294; px++) {
        // wobble the border a little so the coast is not a clean line
        const x = 51 + px * 3, y = 258 + py * 3;
        const wx = x + (smooth(px, py, 3) - 0.5) * 22;
        if (ctx.isPointInPath(land, wx, y)) {
            ctx.fillStyle = cover(x, y, px, py);
            ctx.fillRect(px, py, 1, 1);
        } else if (ctx.isPointInPath(water, wx, y)) {
            ctx.fillStyle = '#338eff';
            ctx.fillRect(px, py, 1, 1);
        }
    }
}
ctx.setTransform(1 / 3, 0, 0, 1 / 3, -17, -86);
ctx.strokeStyle = '#338eff';
ctx.lineWidth = 8;
ctx.stroke(creeks);
```
